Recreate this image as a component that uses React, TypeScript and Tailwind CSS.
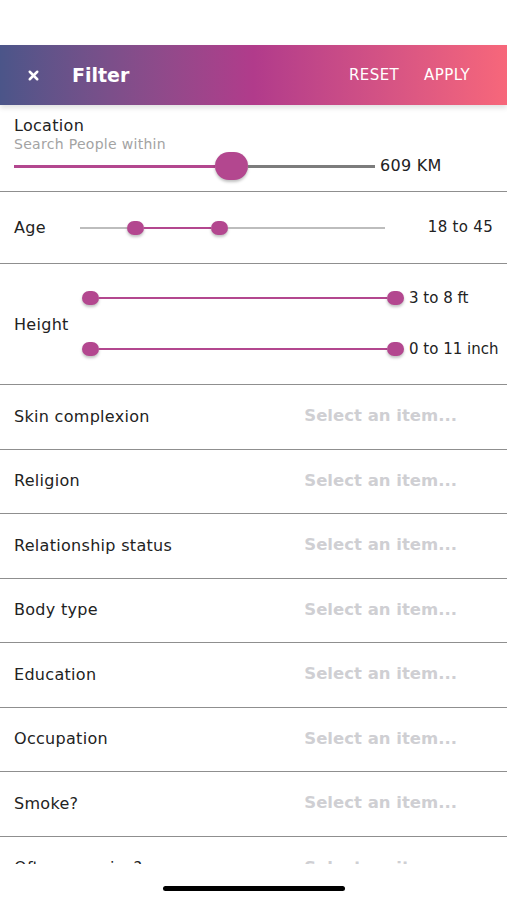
import { X } from 'lucide-react'

const ROWS = ['Skin complexion', 'Religion', 'Relationship status', 'Body type', 'Education', 'Occupation', 'Smoke?', 'Often exercise?']

function Thumb({ big }: { big?: boolean }) {
  return (
    <div className={`shrink-0 rounded-full bg-[#b3478f] shadow-[0_2px_3px_rgba(0,0,0,0.25)] ${big ? 'w-[33px] h-[28px]' : 'w-[17px] h-[14px]'}`} />
  )
}

function FullRange({ label }: { label: string }) {
  return (
    <div className="flex items-center h-[14px]">
      <div className="w-[322px] flex items-center">
        <Thumb />
        <div className="flex-1 h-[2px] bg-[#b3478f]" />
        <Thumb />
      </div>
      <span className="ml-[5px] text-[15px] leading-[14px] text-[#222]">{label}</span>
    </div>
  )
}

export default function App() {
  return (
    <div className="w-[507px] h-[900px] bg-white flex flex-col overflow-hidden" style={{ fontFamily: '"DejaVu Sans", sans-serif' }}>
      <div className="h-[45px] shrink-0" />
      <header className="h-[60px] shrink-0 bg-gradient-to-r from-[#4b5589] via-[#b13b8b] to-[#f7677a] flex items-center text-white shadow-[0_3px_5px_rgba(0,0,0,0.12)] relative z-10">
        <X size={15} strokeWidth={4} className="ml-[26px]" />
        <span className="ml-[31px] text-[19px] font-bold">Filter</span>
        <span className="ml-auto text-[15px] tracking-[0.4px]">RESET</span>
        <span className="ml-[25px] mr-[37px] text-[15px] tracking-[0.4px]">APPLY</span>
      </header>

      <div className="h-[759px] shrink-0 overflow-hidden text-[#222]">
        {/* Location */}
        <div className="h-[87px] border-b-[1.5px] border-[#8f8f8f] pl-[14px] pt-[11px]">
          <p className="text-[16px] leading-[20px] tracking-[0.3px]">Location</p>
          <p className="text-[14px] leading-[17px] text-[#a3a3a3] tracking-[0.3px]">Search People within</p>
          <div className="flex items-center mt-[-1px]">
            <div className="w-[361px] flex items-center">
              <div className="w-[201px] h-[3px] bg-[#b3478f]" />
              <Thumb big />
              <div className="flex-1 h-[3px] bg-[#7c7c7c]" />
            </div>
            <span className="ml-[5px] text-[16px] tracking-[0.3px]">609 KM</span>
          </div>
        </div>

        {/* Age */}
        <div className="h-[72px] border-b-[1.5px] border-[#8f8f8f] flex items-center pl-[14px] pr-[14px]">
          <span className="w-[66px] text-[16px] tracking-[0.3px]">Age</span>
          <div className="w-[305px] flex items-center">
            <div className="w-[47px] h-[2px] bg-[#bdbdbd]" />
            <Thumb />
            <div className="w-[67px] h-[2px] bg-[#b3478f]" />
            <Thumb />
            <div className="flex-1 h-[2px] bg-[#bdbdbd]" />
          </div>
          <span className="ml-auto text-[15px] tracking-[0.3px]">18 to 45</span>
        </div>

        {/* Height */}
        <div className="h-[121px] border-b-[1.5px] border-[#8f8f8f] flex items-center pl-[14px]">
          <span className="w-[68px] text-[16px] tracking-[0.3px] mt-[2px]">Height</span>
          <div className="flex flex-col gap-[37px] mt-[-2px]">
            <FullRange label="3 to 8 ft" />
            <FullRange label="0 to 11 inch" />
          </div>
        </div>

        {ROWS.map((r) => (
          <div key={r} className="h-[64.5px] border-b-[1.5px] border-[#8f8f8f] flex items-center pl-[14px]">
            <span className="text-[16px] tracking-[0.3px]">{r}</span>
            <span className="ml-auto mr-[50px] text-[16.5px] font-bold text-[#cfcfd3]">Select an item...</span>
          </div>
        ))}
      </div>

      <div className="flex-1 flex justify-center pt-[22px]">
        <div className="w-[182px] h-[5px] rounded-full bg-black" />
      </div>
    </div>
  )
}
